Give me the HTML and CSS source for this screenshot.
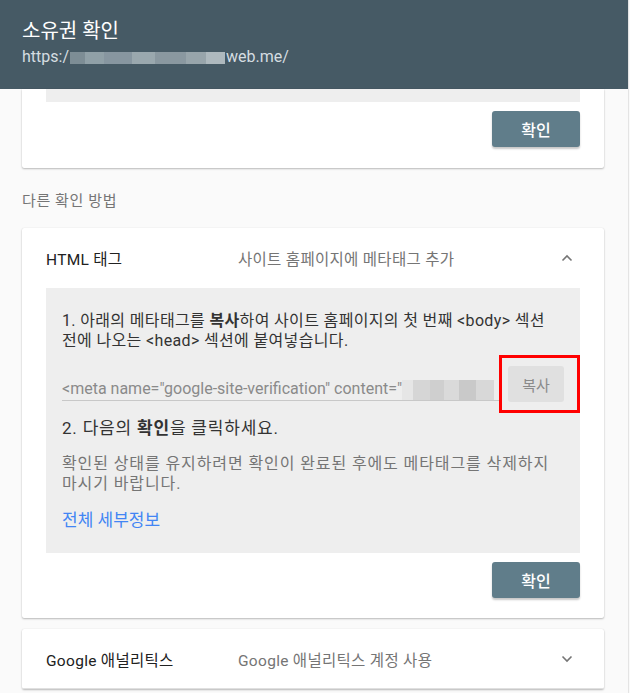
FILE: index.html
```html
<!DOCTYPE html>
<html lang="ko">
<head>
<meta charset="utf-8">
<link rel="stylesheet" href="styles.css">
</head>
<body>
<div class="page">
  <header class="topbar">
    <div class="title">소유권 확인</div>
    <div class="url">https:/<span class="blur-url"></span>web.me/</div>
  </header>
  <main class="content">
    <section class="card card-top">
      <div class="graybox graybox-tail"></div>
      <div class="actions"><button class="btn-primary">확인</button></div>
    </section>

    <div class="section-label">다른 확인 방법</div>

    <section class="card card-open">
      <div class="method-row">
        <span class="method-name">HTML 태그</span>
        <span class="method-desc">사이트 홈페이지에 메타태그 추가</span>
        <svg class="chev" width="12" height="8" viewBox="0 0 12 8"><path d="M1.5 6.5 L6 2 L10.5 6.5" fill="none" stroke="#757575" stroke-width="1.6"/></svg>
      </div>
      <div class="graybox">
        <p class="step">1. 아래의 메타태그를 <b>복사</b>하여 사이트 홈페이지의 첫 번째 &lt;body&gt; 섹션 전에 나오는 &lt;head&gt; 섹션에 붙여넣습니다.</p>
        <div class="meta-row">
          <div class="meta-field"><span class="meta-text">&lt;meta name="google-site-verification" content="</span><span class="blur-meta"></span></div>
          <div class="copy-wrap">
            <button class="btn-copy">복사</button>
            <span class="highlight"></span>
          </div>
        </div>
        <p class="step2">2. 다음의 <b>확인</b>을 클릭하세요.</p>
        <p class="note">확인된 상태를 유지하려면 확인이 완료된 후에도 메타태그를 삭제하지 마시기 바랍니다.</p>
        <a class="details" href="#">전체 세부정보</a>
      </div>
      <div class="actions"><button class="btn-primary">확인</button></div>
    </section>

    <section class="card card-collapsed">
      <div class="method-row">
        <span class="method-name">Google 애널리틱스</span>
        <span class="method-desc">Google 애널리틱스 계정 사용</span>
        <svg class="chev" width="12" height="8" viewBox="0 0 12 8"><path d="M1.5 1.5 L6 6 L10.5 1.5" fill="none" stroke="#757575" stroke-width="1.6"/></svg>
      </div>
      <div class="row-divider"></div>
    </section>
  </main>
</div>
</body>
</html>
```

FILE: styles.css
```css
* { box-sizing: border-box; }
html, body { margin: 0; padding: 0; }
body {
  background: #fafafa;
  font-family: Roboto, "Noto Sans CJK KR", sans-serif;
  color: #212121;
  width: 630px;
  height: 693px;
  overflow: hidden;
}
.page {
  border-right: 1px solid #e4e4e4;
  width: 629px;
  height: 693px;
}
.topbar {
  background: #465a65;
  height: 89px;
  padding: 17px 22px 0;
  color: #fff;
}
.title {
  font-size: 20px;
  line-height: 28px;
  font-weight: 400;
}
.url {
  font-size: 16px;
  line-height: 22px;
  margin-top: 1px;
  color: #d5dde1;
  display: flex;
  align-items: center;
}
.blur-url {
  display: inline-block;
  width: 155px;
  height: 12px;
  margin: 2px 1px 0;
  background: linear-gradient(90deg, #7d8d95 0 10%, #90a0a7 10% 22%, #8796a0 22% 40%, #9aa8ae 40% 55%, #8a98a0 55% 75%, #98a5ab 75% 88%, #aeb9be 88% 100%);
}
.content {
  padding: 0 24px 0 22px;
}
.card {
  background: #fff;
  box-shadow: 0 1px 2px rgba(0,0,0,0.25), 0 0 1px rgba(0,0,0,0.12);
  border-radius: 2px;
  padding: 0 24px;
}
.card-top {
  border-radius: 0 0 2px 2px;
  padding-bottom: 21px;
}
.card-open {
  padding-bottom: 20px;
}
.graybox {
  background: #eeeeee;
  padding: 23px 16px 22px;
}
.graybox-tail {
  height: 13px;
  padding: 0;
}
.actions {
  display: flex;
  justify-content: flex-end;
  padding-top: 9px;
}
.btn-primary {
  width: 88px;
  height: 36px;
  border: none;
  border-radius: 3px;
  background: #607d8a;
  color: #fff;
  font-family: Roboto, "Noto Sans CJK KR", sans-serif;
  font-size: 16px;
  font-weight: 500;
  box-shadow: 0 2px 2px rgba(0,0,0,0.22);
}
.section-label {
  font-size: 15px;
  letter-spacing: 0.6px;
  color: #757575;
  padding: 23px 0 17px;
  line-height: 20px;
}
.method-row {
  display: flex;
  align-items: center;
  height: 60px;
  font-size: 15.5px;
  letter-spacing: 0.3px;
}
.method-name {
  width: 192px;
  color: #212121;
}
.method-desc {
  flex: 1;
  color: #757575;
}
.chev {
  margin-right: 7px;
}
.step {
  margin: 0;
  font-size: 16px;
  line-height: 20px;
  letter-spacing: 0.35px;
  color: #333;
}
.step b, .step2 b { font-weight: 700; }
.meta-row {
  display: flex;
  align-items: flex-end;
  margin-top: 15px;
}
.meta-field {
  width: 438px;
  border-bottom: 1px solid #c8c8c8;
  font-size: 16px;
  line-height: 19px;
  color: #8a8a8a;
  display: flex;
  align-items: flex-end;
  height: 26px;
  padding-bottom: 2px;
  margin-bottom: 1px;
  overflow: hidden;
  white-space: nowrap;
}
.meta-text { flex: none; }
.blur-meta {
  flex: none;
  width: 92px;
  height: 20px;
  margin-bottom: -2px;
  background: linear-gradient(90deg, #e6e6e6 0 12%, #d6d6d6 12% 30%, #cfcfcf 30% 46%, #dadada 46% 62%, #c9c9c9 62% 80%, #d8d8d8 80% 100%);
}
.copy-wrap {
  position: relative;
  margin-left: 9px;
}
.btn-copy {
  display: block;
  width: 56px;
  height: 36px;
  border: none;
  border-radius: 3px;
  background: #e0e0e0;
  color: #8a8a8a;
  font-family: Roboto, "Noto Sans CJK KR", sans-serif;
  font-size: 15px;
}
.highlight {
  position: absolute;
  left: -9px;
  top: -11px;
  width: 81px;
  height: 58px;
  border: 3px solid #ff0000;
}
.step2 {
  margin: 15px 0 0;
  font-size: 17px;
  line-height: 22px;
  letter-spacing: 0.8px;
  color: #333;
}
.note {
  margin: 15px 0 0;
  font-size: 16px;
  line-height: 20px;
  letter-spacing: 0.9px;
  color: #757575;
}
.details {
  display: inline-block;
  margin-top: 15px;
  font-size: 17px;
  line-height: 22px;
  color: #4285f4;
  text-decoration: none;
}
.card-collapsed {
  margin-top: 11px;
}
.card-collapsed .method-row {
  height: 59px;
}
.row-divider {
  height: 1px;
  background: #e0e0e0;
  margin: 0 -24px;
}
```
